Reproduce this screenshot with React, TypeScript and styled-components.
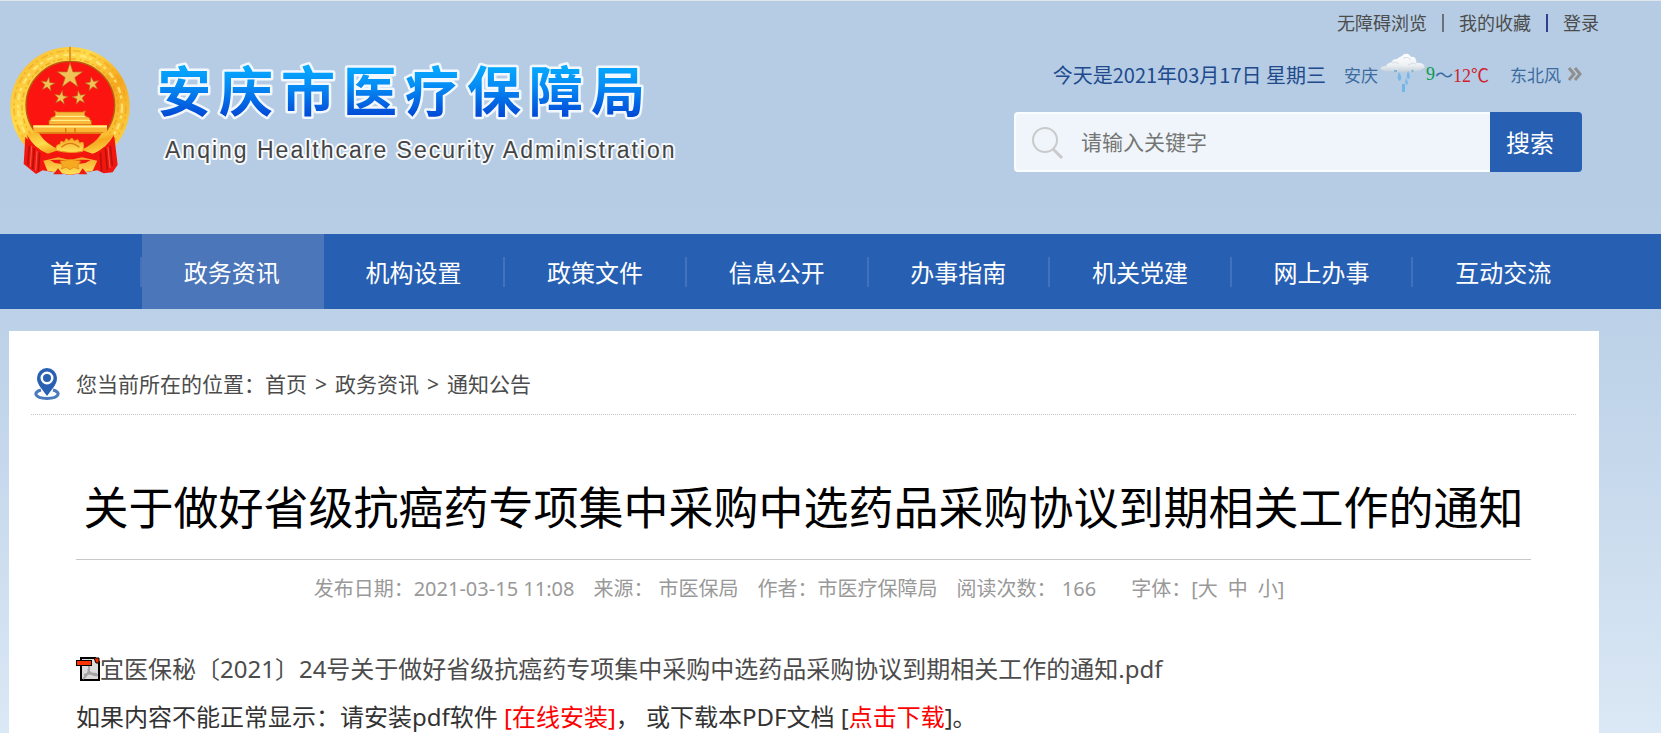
import React from "react";
import styled, { createGlobalStyle } from "styled-components";

const sans = `"Noto Sans", "Noto Sans CJK SC", sans-serif`;

const GlobalStyle = createGlobalStyle`
  *, *::before, *::after { box-sizing: border-box; }
  body { margin: 0; font-family: ${sans}; color: #4c4c4c; }
  a { color: inherit; text-decoration: none; }
  h1, p, ul, ol { margin: 0; padding: 0; font-weight: 400; }
  ul, ol { list-style: none; }
`;

const Page = styled.div`
  min-height: 100vh;
  display: flex;
  flex-direction: column;
  border-top: 1px solid #dfe6ea;
  background: linear-gradient(#b5cce4 200px, #c4d7eb 440px, #dbe8f5 733px);
`;

const Header = styled.header`
  display: flex;
  justify-content: space-between;
  height: 233px;
  padding-right: 62px;
`;

const Brand = styled.a`
  display: flex;
  align-items: flex-start;
  gap: 20px;
  padding: 45px 0 0 10px;
`;

const Side = styled.div`
  display: flex;
  flex-direction: column;
  align-items: flex-end;
`;

const TopLinks = styled.nav`
  display: flex;
  align-items: center;
  gap: 15px;
  height: 44px;
  font-size: 18px;
  line-height: 24px;
`;

const Bar = styled.span<{ $tone: string }>`
  width: 2px;
  height: 18px;
  background: ${(p) => p.$tone};
`;

const InfoRow = styled.div`
  display: flex;
  align-items: center;
  height: 58px;
  padding-right: 17px;
  font-size: 17px;
  color: #3b6b9f;
`;

const Today = styled.span`
  margin-right: 18px;
  font-family: "Noto Sans CJK SC", sans-serif;
  font-size: 20px;
  color: #204a8c;
`;

const Temp = styled.span<{ $color?: string }>`
  font-family: "Liberation Serif", "Noto Sans CJK SC", serif;
  font-size: 18px;
  color: ${(p) => p.$color || "inherit"};
`;

const Wind = styled.a`
  display: flex;
  align-items: center;
  gap: 7px;
  margin-left: 21px;
`;

const SearchForm = styled.form`
  display: flex;
  width: 568px;
  height: 60px;
  margin: 9px 17px 0 0;
`;

const SearchField = styled.label`
  flex: 1;
  display: flex;
  align-items: center;
  gap: 17px;
  padding-left: 16px;
  border: 2px solid #fafdff;
  border-right: 0;
  border-radius: 4px 0 0 4px;
  background: #eff5fa;
`;

const SearchInput = styled.input`
  flex: 1;
  min-width: 0;
  border: 0;
  padding: 0;
  outline: 0;
  background: transparent;
  font: 21px ${sans};
  color: #444;
  &::placeholder { color: #757575; opacity: 1; }
`;

const SearchButton = styled.button`
  width: 92px;
  border: 0;
  padding: 0 12px 2px 0;
  border-radius: 0 4px 4px 0;
  background: #275fb3;
  color: #fff;
  font: 24px ${sans};
`;

const MainNav = styled.nav`
  height: 75px;
  padding-right: 66px;
  background: #275fb3;
`;

const NavList = styled.ul`
  display: flex;
  height: 100%;
`;

const NavItem = styled.li<{ $home?: boolean; $active?: boolean; $last?: boolean }>`
  flex: ${(p) => (p.$home ? "0 0 142px" : "1")};
  padding: ${(p) => (p.$home ? "0 0 0 6px" : "0 2px 0 0")};
  background: ${(p) =>
    p.$active
      ? "#4b76ba"
      : p.$last
      ? "none"
      : "linear-gradient(#4371bb, #4371bb) right center / 2px 30px no-repeat"};
`;

const NavLink = styled.a`
  display: flex;
  align-items: center;
  justify-content: center;
  height: 100%;
  font-size: 24px;
  color: #fff;
  white-space: nowrap;
`;

const Panel = styled.main`
  flex: 1;
  margin: 22px 62px 0 9px;
  background: #fff;
`;

const Crumbs = styled.nav`
  display: flex;
  align-items: center;
  margin: 0 23px 0 22px;
  padding: 37px 0 14px 3px;
  border-bottom: 1px dotted #c8c8c8;
  font-size: 21px;
  line-height: 32px;
`;

const CrumbList = styled.ol`
  display: flex;
  margin-left: 16px;
  li + li::before { content: ">"; margin: 0 8px; }
`;

const Article = styled.article`
  margin: 0 68px 0 67px;
  padding-top: 63px;
`;

const Title = styled.h1`
  padding-bottom: 21px;
  border-bottom: 1px solid #c8c8c8;
  font-size: 45px;
  line-height: 60px;
  text-align: center;
  color: #000;
`;

const Meta = styled.div`
  display: flex;
  justify-content: center;
  gap: 19px;
  margin: 14px 9px 50px 0;
  font-size: 20px;
  line-height: 30px;
  color: #999;
`;

const FontSizes = styled.span`
  margin-left: 16px;
`;

const SizeButton = styled.button`
  border: 0;
  padding: 0;
  background: none;
  font: inherit;
  color: inherit;
  & + & { margin-left: 10px; }
`;

const Body = styled.div`
  display: flex;
  flex-direction: column;
  gap: 18px;
  font-size: 24px;
  line-height: 30px;
  color: #333;
`;

const FileLink = styled.a`
  display: flex;
  align-items: center;
  color: #4c4c4c;
`;

const RedLink = styled.a`
  color: #f00;
`;

const star = (cx: number, cy: number, r: number, rot = 0) =>
  Array.from({ length: 10 }, (_, i) => {
    const a = ((i * 36 + rot - 90) * Math.PI) / 180;
    const d = i % 2 ? r * 0.38 : r;
    return `${(cx + d * Math.cos(a)).toFixed(1)},${(cy + d * Math.sin(a)).toFixed(1)}`;
  }).join(" ");

const Emblem = () => (
  <svg width="120" height="129" viewBox="30 46 360 387" aria-hidden="true">
    <defs>
      <linearGradient id="gold" x1="0" y1="0" x2="1" y2="1">
        <stop offset="0" stopColor="#f6b52c" />
        <stop offset=".35" stopColor="#ffdb4a" />
        <stop offset=".6" stopColor="#f5a81f" />
        <stop offset="1" stopColor="#ffe24f" />
      </linearGradient>
      <linearGradient id="ray" x1="0" y1="0" x2="0" y2="1">
        <stop offset="0" stopColor="#f6a62a" />
        <stop offset="1" stopColor="#ffe45a" />
      </linearGradient>
    </defs>
    <circle cx="210" cy="228" r="179" fill="url(#gold)" />
    <circle cx="210" cy="228" r="168" fill="none" stroke="#ee9a1c" strokeWidth="5" strokeDasharray="22 9 6 13" opacity=".5" />
    <circle cx="210" cy="228" r="156" fill="none" stroke="#fff08a" strokeWidth="7" strokeDasharray="19 8 9 15" opacity=".7" />
    <circle cx="210" cy="228" r="144" fill="none" stroke="#e88f18" strokeWidth="5" strokeDasharray="16 11 5 8" opacity=".5" />
    <path d="M210 48v42" stroke="#dc8a1a" strokeWidth="5" />
    <ellipse cx="211" cy="224" rx="133" ry="132" fill="#fb1410" stroke="#b75a12" strokeWidth="4" />
    <g fill="#f3c257" stroke="#b5651c" strokeWidth="2">
      <polygon points={star(210, 136, 40)} />
      <polygon points={star(143, 161, 22, 10)} />
      <polygon points={star(277, 160, 22, -10)} />
      <polygon points={star(183, 201, 22, 10)} />
      <polygon points={star(238, 201, 22, -10)} />
    </g>
    <path
      d="M166 247l-3-7 10 4h74l10-4-3 7v8l15 7v7h5v13H147v-13h5v-7l14-7z"
      fill="#f9b73b"
      stroke="#c8720f"
      strokeWidth="2"
    />
    <path d="M166 257h90M152 269h118" stroke="#fff08a" strokeWidth="4" />
    <path d="M100 283h221v26H100z" fill="#fbb535" />
    <path d="M100 288h221" stroke="#fff193" strokeWidth="5" />
    <path d="M112 307h198M197 292v15M225 292v15" stroke="#d8750f" strokeWidth="4" />
    <path d="M82 312q20 40 58 54l28-10-48-46h180l-46 46 30 10q36-16 58-54l-4 60-128 30-126-30z" fill="#f3190f" />
    <path
      d="M76 318l20 24 38 25q35-2 76 10 41-12 76-10l38-25 19-24 10 84-15 23-27 3-19-9-82 14-82-14-20 11-37-30z"
      fill="#f3160f"
    />
    <path d="M80 310q24 44 64 59l34-12q-38-14-62-50zM342 310q-24 44-64 59l-34-12q38-14 62-50z" fill="url(#gold)" />
    <path d="M168 359q-2-18 12-18l3-9 10 3 5-11 9 6 8-8 8 9 11-4 4 10 11-2q5 14-1 27-38 8-80-3z" fill="url(#ray)" stroke="#ec9c20" strokeWidth="3" />
    <path d="M184 350q26-24 54 0" fill="none" stroke="#d97a12" strokeWidth="4" />
    <path d="M130 390l45-10 35 8 36-8 46 10-14 30-68 12-68-12z" fill="url(#ray)" />
    <path d="M150 388q60-4 60 8 0-12 62-8l-16 9-46 6-46-6z" fill="#ee1b10" />
    <path d="M180 391l8 16-5 8 16-5 11 7 11-7 16 5-4-9 9-15-31-5z" fill="#f7a920" stroke="#db7e12" strokeWidth="2" />
    <path d="M88 346l-5 58M103 352l-5 64M119 366l-4 56M331 346l6 60M316 352l6 66M301 366l4 56" stroke="#b5120d" strokeWidth="5" fill="none" />
    <path d="M95 346l-4 62M111 362l-4 58M324 350l6 62" stroke="#ff5a48" strokeWidth="3" fill="none" />
    <path d="M160 431l14-18 14 18zM236 431l12-18 14 18z" fill="#ef1c12" />
  </svg>
);

const BrandText = () => (
  <svg width="530" height="124" viewBox="150 46 530 124" role="img" aria-label="安庆市医疗保障局">
    <defs>
      <linearGradient id="brandBlue" gradientUnits="userSpaceOnUse" x1="0" y1="66" x2="0" y2="116">
        <stop offset="0" stopColor="#05aaff" />
        <stop offset=".4" stopColor="#058cf5" />
        <stop offset="1" stopColor="#0049d6" />
      </linearGradient>
    </defs>
    <text
      x="157"
      y="112"
      fontFamily='"Noto Sans CJK SC", sans-serif'
      fontWeight="700"
      fontSize="54"
      letterSpacing="8"
      fill="url(#brandBlue)"
      stroke="#f3f8ff"
      strokeWidth="5"
      strokeLinejoin="round"
      paintOrder="stroke"
    >
      安庆市医疗保障局
    </text>
    <text
      x="165"
      y="158"
      fontFamily='"Liberation Sans", Arial, sans-serif'
      fontSize="23"
      letterSpacing="2"
      fill="#444"
      stroke="#f6f9fd"
      strokeWidth="4"
      strokeLinejoin="round"
      paintOrder="stroke"
    >
      Anqing Healthcare Security Administration
    </text>
  </svg>
);

const RainCloud = () => (
  <svg width="48" height="42" viewBox="0 0 48 42" aria-hidden="true">
    <defs>
      <linearGradient id="cloud" x1="0" y1="0" x2="0" y2="1">
        <stop offset="0" stopColor="#fff" />
        <stop offset=".6" stopColor="#eef1f4" />
        <stop offset="1" stopColor="#c3cdd8" />
      </linearGradient>
    </defs>
    <path
      d="M2 16q1-3 6-3 1-3 6-4 0-3 5-3 2-2 5-3 2-3 6-2 2 1 3 3 4-1 5 3 1 2 0 3 5-1 8 2 2 3-2 4-2 2-6 2-3 2-7 0-4 2-9 1-5 1-8-1-7 1-12-2z"
      fill="url(#cloud)"
    />
    <path d="M14 10q4-2 7 1M25 5q5-2 8 2M30 12q4-3 8-1" fill="none" stroke="#d9dfe5" strokeWidth="1" />
    <path d="M21 19q4 6 1 9-4-1-1-9zM30 18q3 5 1 8-4-1-1-8zM28 25q3 5 1 7-3-1-1-7z" fill="#69b4e6" opacity=".85" />
    <path d="M16 18h3M34 17l1 2" stroke="#7cb4dc" strokeWidth="2" />
    <path d="M24 31h3v8h-3z" fill="#72b5e8" />
  </svg>
);

const DoubleChevron = () => (
  <svg width="14" height="16" viewBox="0 0 14 16" aria-hidden="true">
    <path d="M1 2l5 6-5 6M7 2l5 6-5 6" fill="none" stroke="#8f8f8f" strokeWidth="3" />
  </svg>
);

const Magnifier = () => (
  <svg width="32" height="33" viewBox="0 0 32 33" aria-hidden="true">
    <circle cx="13" cy="14" r="12" fill="none" stroke="#c9cacb" strokeWidth="2" />
    <path d="M21 23l9 9" stroke="#c9cacb" strokeWidth="3" />
  </svg>
);

const Pin = () => (
  <svg width="26" height="32" viewBox="0 0 26 32" aria-hidden="true">
    <path
      fillRule="evenodd"
      d="M13 0a10 10 0 0 1 10 10q0 5-4 10l-6 8-6-8q-4-5-4-10A10 10 0 0 1 13 0zM13 3.500a6.500 6.500 0 1 0 0 13 6.500 6.500 0 0 0 0-13z"
      fill="#2a60b3"
    />
    <circle cx="13" cy="10" r="4" fill="#2a60b3" />
    <path d="M7 22c-8 2-7 8 6 8.500 13-.5 14-6.500 6-8.500" fill="none" stroke="#4a79be" strokeWidth="3" />
  </svg>
);

const PdfIcon = () => (
  <svg width="24" height="24" viewBox="0 0 24 24" aria-hidden="true">
    <path d="M5 1h14l4 4v18H5z" fill="#dcdcdc" stroke="#000" strokeWidth="2" />
    <path d="M13 8c1 6-1 10-6 14M12 12c2 5 5 7 10 6M8 18c4-2 8-2 13-1" fill="none" stroke="#a4a4a4" strokeWidth="2" />
    <path d="M18 1h5v5h-3z" fill="#ff2a00" stroke="#000" strokeWidth="1" />
    <path d="M0 3h16v6H0z" fill="#000" />
    <path d="M1 4h14v4H1z" fill="#ff3300" />
  </svg>
);

const sections = ["首页", "政务资讯", "机构设置", "政策文件", "信息公开", "办事指南", "机关党建", "网上办事", "互动交流"];

export default function App() {
  return (
    <>
      <GlobalStyle />
      <Page>
        <Header>
          <Brand href="#">
            <Emblem />
            <BrandText />
          </Brand>
          <Side>
            <TopLinks>
              <a href="#">无障碍浏览</a>
              <Bar $tone="#6b7177" />
              <a href="#">我的收藏</a>
              <Bar $tone="#2f3f8c" />
              <a href="#">登录</a>
            </TopLinks>
            <InfoRow>
              <Today>今天是2021年03月17日 星期三</Today>
              <span>安庆</span>
              <RainCloud />
              <Temp $color="#0c9b4b">9</Temp>
              <Temp>～</Temp>
              <Temp $color="#d0202c">12℃</Temp>
              <Wind href="#">
                东北风
                <DoubleChevron />
              </Wind>
            </InfoRow>
            <SearchForm onSubmit={(e) => e.preventDefault()}>
              <SearchField>
                <Magnifier />
                <SearchInput type="text" placeholder="请输入关键字" aria-label="请输入关键字" />
              </SearchField>
              <SearchButton type="submit">搜索</SearchButton>
            </SearchForm>
          </Side>
        </Header>

        <MainNav>
          <NavList>
            {sections.map((name, i) => (
              <NavItem key={name} $home={i === 0} $active={i === 1} $last={i === sections.length - 1}>
                <NavLink href="#">{name}</NavLink>
              </NavItem>
            ))}
          </NavList>
        </MainNav>

        <Panel>
          <Crumbs>
            <Pin />
            <CrumbList>
              <li>
                您当前所在的位置：<a href="#">首页</a>
              </li>
              <li>
                <a href="#">政务资讯</a>
              </li>
              <li>
                <a href="#">通知公告</a>
              </li>
            </CrumbList>
          </Crumbs>

          <Article>
            <Title>关于做好省级抗癌药专项集中采购中选药品采购协议到期相关工作的通知</Title>
            <Meta>
              <span>发布日期：2021-03-15 11:08</span>
              <span>来源： 市医保局</span>
              <span>作者：市医疗保障局</span>
              <span>阅读次数： 166</span>
              <FontSizes>
                字体：[<SizeButton type="button">大</SizeButton>
                <SizeButton type="button">中</SizeButton>
                <SizeButton type="button">小</SizeButton>]
              </FontSizes>
            </Meta>
            <Body>
              <FileLink href="#">
                <PdfIcon />
                宜医保秘〔2021〕24号关于做好省级抗癌药专项集中采购中选药品采购协议到期相关工作的通知.pdf
              </FileLink>
              <p>
                如果内容不能正常显示：请安装pdf软件 <RedLink href="#">[在线安装]</RedLink>， 或下载本PDF文档 [
                <RedLink href="#">点击下载</RedLink>]。
              </p>
            </Body>
          </Article>
        </Panel>
      </Page>
    </>
  );
}
